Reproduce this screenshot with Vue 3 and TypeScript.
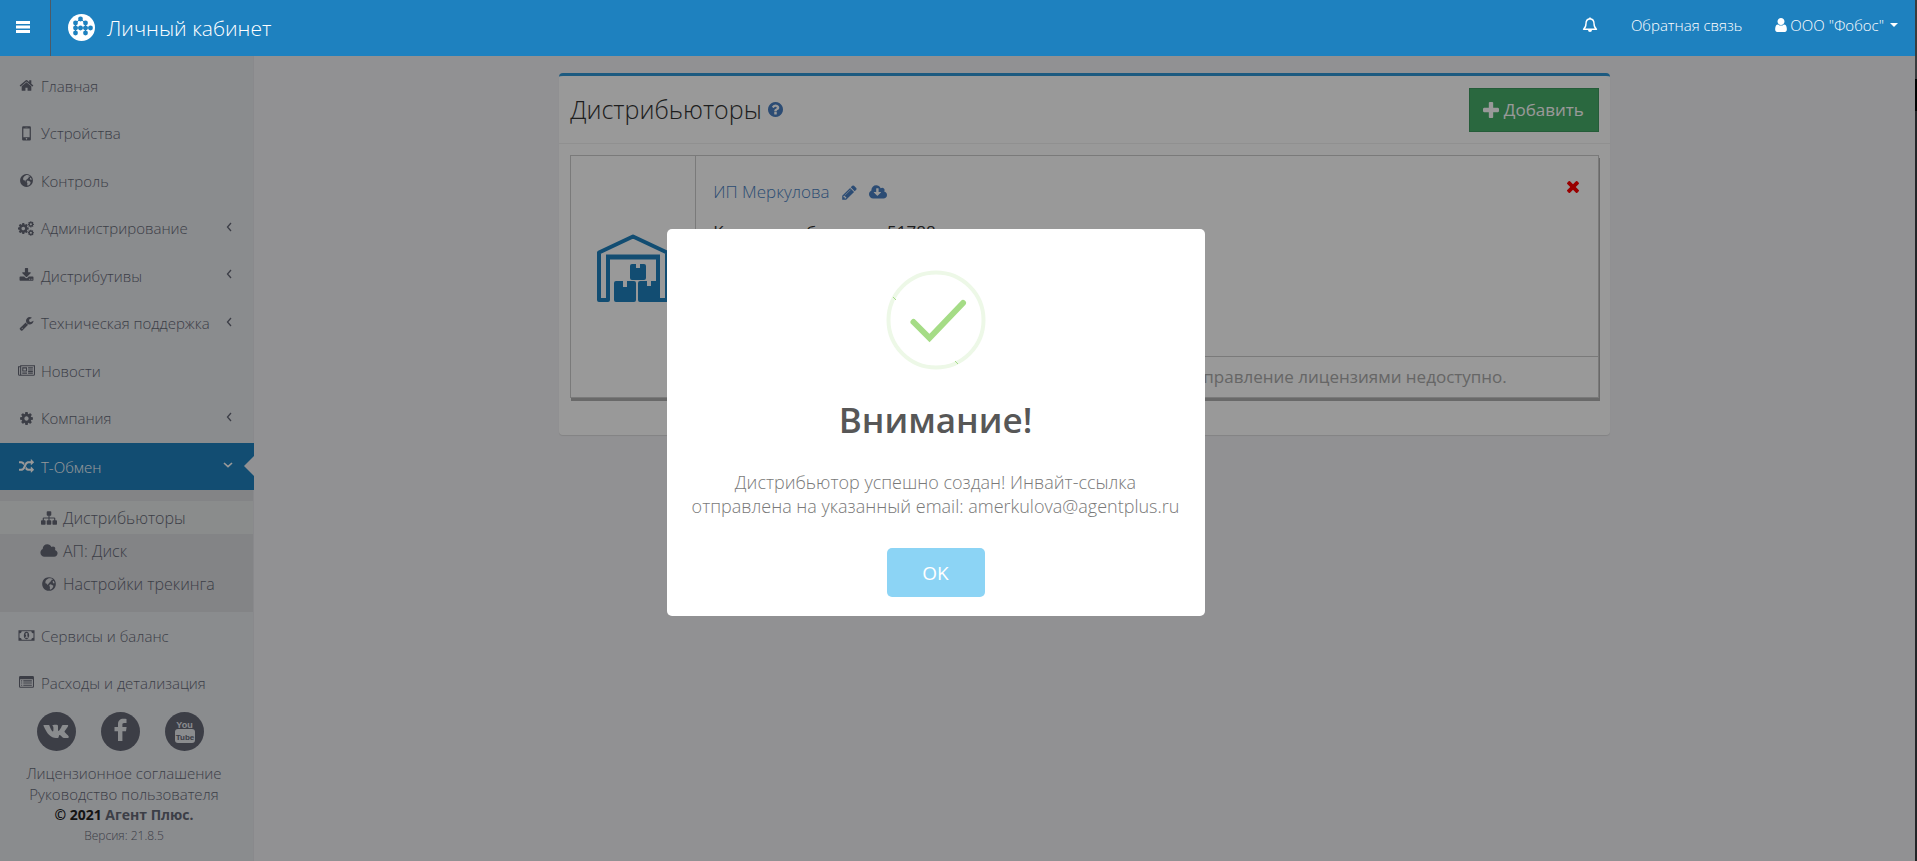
<script setup lang="ts">
import { ref } from 'vue'

interface Item {
  label: string
  icon: string
  sub?: boolean
}

const mainItems: Item[] = [
  { label: 'Главная', icon: 'home' },
  { label: 'Устройства', icon: 'mobile' },
  { label: 'Контроль', icon: 'globe' },
  { label: 'Администрирование', icon: 'cogs', sub: true },
  { label: 'Дистрибутивы', icon: 'download', sub: true },
  { label: 'Техническая поддержка', icon: 'wrench', sub: true },
  { label: 'Новости', icon: 'news' },
  { label: 'Компания', icon: 'cog', sub: true }
]
const subItems: Item[] = [
  { label: 'Дистрибьюторы', icon: 'sitemap' },
  { label: 'АП: Диск', icon: 'cloud' },
  { label: 'Настройки трекинга', icon: 'globe' }
]
const lastItems: Item[] = [
  { label: 'Сервисы и баланс', icon: 'money' },
  { label: 'Расходы и детализация', icon: 'list' }
]
const logoDots = [
  [12.5, 5], [7.5, 9], [17.5, 9], [7.5, 14], [12.5, 14], [17.5, 14], [22.5, 14], [7.5, 19], [17.5, 19]
]
const dialogOpen = ref(true)
</script>

<template>
  <svg class="defs" aria-hidden="true">
    <symbol id="home" viewBox="0 0 1792 1792"><path d="M1472 992v480q0 26-19 45t-45 19h-384v-384h-256v384h-384q-26 0-45-19t-19-45v-480q0-1 .5-3t.5-3l575-474 575 474q1 2 1 6zm223-69l-62 74q-8 9-21 11h-3q-13 0-21-7l-692-577-692 577q-12 8-24 7-13-2-21-11l-62-74q-8-10-7-23.5t11-21.5l719-599q32-26 76-26t76 26l244 204v-195q0-14 9-23t23-9h192q14 0 23 9t9 23v408l219 182q10 8 11 21.5t-7 23.5z" /></symbol>
    <symbol id="mobile" viewBox="0 0 1792 1792"><path fill-rule="evenodd" d="M500 40h792q128 0 128 128v1436q0 128-128 128h-792q-128 0-128-128v-1436q0-128 128-128zM520 290v1040h752v-1040zM896 1430a90 90 0 1 0 1 0zM760 140v50h272v-50z" /></symbol>
    <symbol id="globe" viewBox="0 0 1792 1792"><path fill-rule="evenodd" d="M896 128a768 768 0 1 0 1 0zM880 250l130-10 190 50 130 110-90 40-60-30-50 60 60 60-110 70-60 110-110 40-30 110-120 20 50 130-90-30-90-140-80 20-70-150 60-200 110-130zM1010 910l190 60 190 120-50 180-120 170-190 90-50-170 30-130-90-140zM1290 620l130-80 100 230-80 60-90-60z" /></symbol>
    <symbol id="cog" viewBox="0 0 1792 1792"><path d="M1152 896q0-106-75-181t-181-75-181 75-75 181 75 181 181 75 181-75 75-181zm512-109v222q0 12-8 23t-20 13l-185 28q-19 54-39 91 35 50 107 138 10 12 10 25t-9 23q-27 37-99 108t-94 71q-12 0-26-9l-138-108q-44 23-91 38-16 136-29 186-7 28-36 28h-222q-14 0-24.5-8.5t-11.5-21.5l-28-184q-49-16-90-37l-141 107q-10 9-25 9-14 0-25-11-126-114-165-168-7-10-7-23 0-12 8-23 15-21 51-66.5t54-70.5q-27-50-41-99l-183-27q-13-2-21-12.5t-8-23.5v-222q0-12 8-23t19-13l186-28q14-46 39-92-40-57-107-138-10-12-10-24 0-10 9-23 26-36 98.5-107.5t94.5-71.5q13 0 26 10l138 107q44-23 91-38 16-136 29-186 7-28 36-28h222q14 0 24.5 8.5t11.5 21.5l28 184q49 16 90 37l142-107q9-9 24-9 13 0 25 10 129 119 165 170 7 8 7 22 0 12-8 23-15 21-51 66.5t-54 70.5q26 50 41 98l183 28q13 2 21 12.5t8 23.5z" /></symbol>
    <symbol id="cogs" viewBox="0 0 1920 1792">
      <use href="#cog" x="-180" y="140" width="1510" height="1510" />
      <use href="#cog" x="1050" y="-30" width="860" height="860" />
      <use href="#cog" x="1050" y="970" width="860" height="860" />
    </symbol>
    <symbol id="download" viewBox="0 0 1792 1792"><path d="M1344 1344q0-26-19-45t-45-19-45 19-19 45 19 45 45 19 45-19 19-45zm256 0q0-26-19-45t-45-19-45 19-19 45 19 45 45 19 45-19 19-45zm128-224v320q0 40-28 68t-68 28h-1472q-40 0-68-28t-28-68v-320q0-40 28-68t68-28h465l135 136q58 56 136 56t136-56l136-136h464q40 0 68 28t28 68zm-325-569q17 41-14 70l-448 448q-18 19-45 19t-45-19l-448-448q-31-29-14-70 17-39 59-39h256v-448q0-26 19-45t45-19h256q26 0 45 19t19 45v448h256q42 0 59 39z" /></symbol>
    <symbol id="wrench" viewBox="0 0 1792 1792"><path d="M448 1472q0-26-19-45t-45-19-45 19-19 45 19 45 45 19 45-19 19-45zm644-420l-682 682q-37 37-90 37-52 0-91-37l-106-108q-38-36-38-90 0-53 38-91l681-681q39 98 114.5 173.5t173.5 114.5zm634-435q0 39-23 106-47 134-164.5 217.5t-258.5 83.5q-185 0-316.5-131.5t-131.5-316.5 131.5-316.5 316.5-131.5q58 0 121.5 16.5t107.5 46.5q16 11 16 28t-16 28l-293 169v224l193 107q5-3 79-48.5t135.5-81 70.5-35.5q15 0 23.5 10t8.5 25z" /></symbol>
    <symbol id="news" viewBox="0 0 2048 1792"><path fill-rule="evenodd" d="M256 256h1792v1088q0 192-192 192h-1664q-192 0-192-192v-960h256zM384 384v1024h1472q64 0 64-64v-960zM128 512v832q0 64 64 64t64-64v-832zM512 512h576v512h-576zM640 640v256h320v-256zM512 1150h576v128h-576zM1216 512h576v128h-576zM1216 768h576v128h-576zM1216 960h576v128h-576zM1216 1150h576v128h-576z" /></symbol>
    <symbol id="random" viewBox="0 0 1792 1792"><path d="M666 481q-60 92-137 273-22-45-37-72.5t-40.5-63.5-51-56.5-63-35-81.5-14.5h-224q-14 0-23-9t-9-23v-192q0-14 9-23t23-9h224q250 0 410 225zm1126 799q0 14-9 23l-320 320q-9 9-23 9-13 0-22.5-9.5t-9.5-22.5v-192q-32 0-85 .5t-81 1-73-1-71-5-64-10.5-63-18.5-58-28.5-59-40-55-53.5-56-69.5q59-93 136-273 22 45 37 72.5t40.5 63.5 51 56.5 63 35 81.5 14.5h256v-192q0-14 9-23t23-9q12 0 24 10l319 319q9 9 9 23zm0-896q0 14-9 23l-320 320q-9 9-23 9-13 0-22.5-9.5t-9.5-22.5v-192h-256q-48 0-87 15t-69 45-51 61.5-45 77.5q-32 62-78 171-29 66-49.5 111t-54 105-64 100-74 83-90 68.5-106.5 42-128 16.5h-224q-14 0-23-9t-9-23v-192q0-14 9-23t23-9h224q48 0 87-15t69-45 51-61.5 45-77.5q32-62 78-171 29-66 49.5-111t54-105 64-100 74-83 90-68.5 106.5-42 128-16.5h256v-192q0-14 9-23t23-9q12 0 24 10l319 319q9 9 9 23z" /></symbol>
    <symbol id="sitemap" viewBox="0 0 1792 1792"><path d="M1792 1248v320q0 40-28 68t-68 28h-320q-40 0-68-28t-28-68v-320q0-40 28-68t68-28h96v-192h-512v192h96q40 0 68 28t28 68v320q0 40-28 68t-68 28h-320q-40 0-68-28t-28-68v-320q0-40 28-68t68-28h96v-192h-512v192h96q40 0 68 28t28 68v320q0 40-28 68t-68 28h-320q-40 0-68-28t-28-68v-320q0-40 28-68t68-28h96v-192q0-52 38-90t90-38h512v-192h-96q-40 0-68-28t-28-68v-320q0-40 28-68t68-28h320q40 0 68 28t28 68v320q0 40-28 68t-68 28h-96v192h512q52 0 90 38t38 90v192h96q40 0 68 28t28 68z" /></symbol>
    <symbol id="cloud" viewBox="64 0 1920 1792"><path d="M1984 1152q0 159-112.5 271.5t-271.5 112.5h-1088q-185 0-316.5-131.5t-131.5-316.5q0-132 71-241.5t187-163.5q-2-28-2-43 0-212 150-362t362-150q158 0 286.5 88t187.5 230q70-62 166-62 106 0 181 75t75 181q0 75-41 138 129 30 213 134.5t84 239.5z" /></symbol>
    <symbol id="cloud-download" viewBox="64 0 1920 1792"><path d="M1344 864q0-14-9-23t-23-9h-224v-352q0-13-9.5-22.5t-22.5-9.5h-192q-13 0-22.5 9.5t-9.5 22.5v352h-224q-13 0-22.5 9.5t-9.5 22.5q0 14 9 23l352 352q9 9 23 9t23-9l351-351q10-12 10-24zm640 288q0 159-112.5 271.5t-271.5 112.5h-1088q-185 0-316.5-131.5t-131.5-316.5q0-130 70-240t188-165q-2-30-2-43 0-212 150-362t362-150q156 0 285.5 87t188.5 231q71-62 166-62 106 0 181 75t75 181q0 76-41 138 130 31 213.5 135.5t83.5 238.5z" /></symbol>
    <symbol id="money" viewBox="0 0 1920 1792"><path fill-rule="evenodd" d="M0 256h1920v1280h-1920zM384 384q0 106-75 181t-181 75v512q106 0 181 75t75 181h1152q0-106 75-181t181-75v-512q-106 0-181-75t-75-181zM960 460q320 40 320 436t-320 436q-320-40-320-436t320-436zM800 1152h384v-110h-120v-442h-110q-50 70-150 80v100h110v262h-114z" /></symbol>
    <symbol id="list" viewBox="0 0 1792 1792"><path fill-rule="evenodd" d="M160 128h1472q160 0 160 160v1088q0 160-160 160h-1472q-160 0-160-160v-1088q0-160 160-160zM128 512v864q0 32 32 32h1472q32 0 32-32v-864zM256 640h128v128h-128zM512 640h1024v128h-1024zM256 896h128v128h-128zM512 896h1024v128h-1024zM256 1152h128v128h-128zM512 1152h1024v128h-1024z" /></symbol>
    <symbol id="pencil" viewBox="0 0 1792 1792"><path d="M491 1536l91-91-235-235-91 91v107h128v128h107zm523-928q0-22-22-22-10 0-17 7l-542 542q-7 7-7 17 0 22 22 22 10 0 17-7l542-542q7-7 7-17zm-54-192l416 416-832 832h-416v-416zm683 96q0 53-37 90l-166 166-416-416 166-165q36-38 90-38 53 0 91 38l235 234q37 39 37 91z" /></symbol>
    <symbol id="question" viewBox="128 128 1536 1536"><path d="M1024 1376v-192q0-14-9-23t-23-9h-192q-14 0-23 9t-9 23v192q0 14 9 23t23 9h192q14 0 23-9t9-23zm256-672q0-88-55.5-163t-138.5-116-170-41q-243 0-371 213-15 24 8 42l132 100q7 6 19 6 16 0 25-12 53-68 86-92 34-24 86-24 48 0 85.5 26t37.5 59q0 38-20 61t-68 45q-63 28-115.5 86.5t-52.5 125.5v36q0 14 9 23t23 9h192q14 0 23-9t9-23q0-19 21.5-49.5t54.5-49.5q32-18 49-28.5t46-35 44.5-48 28-60.5 12.5-81zm384 192q0 209-103 385.5t-279.5 279.5-385.5 103-385.5-103-279.5-279.5-103-385.5 103-385.5 279.5-279.5 385.5-103 385.5 103 279.5 279.5 103 385.5z" /></symbol>
    <symbol id="times" viewBox="302 366 1188 1188"><path d="M1490 1322q0 40-28 68l-136 136q-28 28-68 28t-68-28l-294-294-294 294q-28 28-68 28t-68-28l-136-136q-28-28-28-68t28-68l294-294-294-294q-28-28-28-68t28-68l136-136q28-28 68-28t68 28l294 294 294-294q28-28 68-28t68 28l136 136q28 28 28 68t-28 68l-294 294 294 294q28 28 28 68z" /></symbol>
    <symbol id="plus" viewBox="192 128 1408 1408"><path d="M1600 736v192q0 40-28 68t-68 28h-416v416q0 40-28 68t-68 28h-192q-40 0-68-28t-28-68v-416h-416q-40 0-68-28t-28-68v-192q0-40 28-68t68-28h416v-416q0-40 28-68t68-28h192q40 0 68 28t28 68v416h416q40 0 68 28t28 68z" /></symbol>
    <symbol id="user" viewBox="256 128 1280 1536"><path d="M1536 1399q0 109-62.5 187t-150.5 78h-854q-88 0-150.5-78t-62.5-187q0-85 8.5-160.5t31.5-152 58.5-131 94-89 134.5-34.5q131 128 313 128t313-128q76 0 134.5 34.5t94 89 58.5 131 31.5 152 8.5 160.5zm-256-887q0 159-112.5 271.5t-271.5 112.5-271.5-112.5-112.5-271.5 112.5-271.5 271.5-112.5 271.5 112.5 112.5 271.5z" /></symbol>
    <symbol id="left" viewBox="0 0 6 10"><path d="M5 1L1.500 5l3.500 4" fill="none" stroke="currentColor" stroke-width="1.300" /></symbol>
    <symbol id="down" viewBox="0 0 10 6"><path d="M1 1l4 3.700L9 1" fill="none" stroke="currentColor" stroke-width="1.600" /></symbol>
  </svg>

  <div class="page">
    <header class="topbar">
      <button class="burger" type="button" aria-label="Меню">
        <svg width="14" height="12" viewBox="0 0 14 12"><path d="M0 0h14v3H0zM0 4.500h14v3H0zM0 9h14v3H0z" /></svg>
      </button>
      <a class="brand" href="#">
        <svg width="27" height="27" viewBox="0 0 27 27">
          <circle cx="13.500" cy="13.500" r="13.500" fill="#fff" />
          <g fill="#1e81bf">
            <path d="M7.500 14h15M7.500 9v10M17.500 9v10M7.500 9l5-4 5 4" fill="none" stroke="#1e81bf" stroke-width="1" />
            <circle v-for="(d, i) in logoDots" :key="i" :cx="d[0]" :cy="d[1]" r="2.400" />
          </g>
        </svg>
        <span>Личный кабинет</span>
      </a>
      <nav class="toplinks">
        <button class="bell" type="button" aria-label="Уведомления">
          <svg width="16" height="16" viewBox="0 0 16 16"><path d="M8 1.800c-2.800.3-4 2.200-4 4.800 0 2.800-.8 4.400-2.500 5.600h13c-1.700-1.200-2.500-2.800-2.500-5.600 0-2.600-1.200-4.500-4-4.800z" fill="none" stroke="currentColor" stroke-width="1.400" stroke-linejoin="round" /><path d="M7.200.6h1.600V2H7.200zM6 13h4a2 2 0 0 1-4 0z" /></svg>
        </button>
        <a href="#">Обратная связь</a>
        <button class="account" type="button">
          <svg width="12" height="14"><use href="#user" /></svg>
          <span>ООО "Фобос"</span>
          <i class="caret"></i>
        </button>
      </nav>
    </header>

    <div class="body">
      <aside class="sidebar">
        <nav>
          <div class="group main-group">
            <a v-for="it in mainItems" :key="it.label" class="item" href="#">
              <svg class="ico" :class="it.icon"><use :href="'#' + it.icon" /></svg>
              <span>{{ it.label }}</span>
              <svg v-if="it.sub" class="arrow" width="6" height="10"><use href="#left" /></svg>
            </a>
          </div>
          <a class="item active" href="#">
            <svg class="ico"><use href="#random" /></svg>
            <span>Т-Обмен</span>
            <svg class="arrow" width="10" height="6"><use href="#down" /></svg>
          </a>
          <div class="submenu">
            <a v-for="(it, i) in subItems" :key="it.label" :class="{ current: i === 0 }" href="#">
              <svg class="ico" :class="it.icon"><use :href="'#' + it.icon" /></svg>
              <span>{{ it.label }}</span>
            </a>
          </div>
          <div class="group">
            <a v-for="it in lastItems" :key="it.label" class="item" href="#">
              <svg class="ico"><use :href="'#' + it.icon" /></svg>
              <span>{{ it.label }}</span>
            </a>
          </div>
        </nav>
        <div class="social">
          <a href="#" aria-label="ВКонтакте">
            <svg width="39" height="39" viewBox="0 0 39 39"><circle cx="19.500" cy="19.500" r="19.500" /><path class="cut" d="M7 13h4.500c.7 0 .9.400 1.100 1 .8 2.400 2.300 5.400 3.200 5.400.5 0 .6-.5.6-1.400v-2.500c0-1.300-.7-1.600-1.200-1.800.5-.7 1.700-.9 3-.9 2.400 0 2.800.4 2.800 1.600v3.800c0 .6.300.8.500.8.800 0 2.700-3.200 3.400-5.200.2-.5.500-.8 1.100-.8h4.300c.9 0 1 .5.800 1.100-.5 1.600-3.600 5.200-3.600 5.500 0 .8 3.300 3.300 4.200 5 .4.900 0 1.400-.9 1.400h-4c-1.600 0-2.700-2.900-4.200-2.900-1 0-.5 2.900-1.700 2.900h-2c-4.800 0-8.800-3.800-12.300-12-.2-.6-.1-1 .4-1z" /></svg>
          </a>
          <a href="#" aria-label="Facebook">
            <svg width="39" height="39" viewBox="0 0 39 39"><circle cx="19.500" cy="19.500" r="19.500" /><path class="cut" d="M25.500 7v4h-2.400c-1.500 0-1.700.8-1.700 1.800V15h4.200l-.6 4.300h-3.600V29H17v-9.700h-3.500V15H17v-2.700c0-3.600 2.100-5.500 5.300-5.500 1.500 0 2.600.1 3.200.2z" /></svg>
          </a>
          <a href="#" aria-label="YouTube">
            <svg width="39" height="39" viewBox="0 0 39 39"><circle cx="19.500" cy="19.500" r="19.500" /><rect class="cut" x="10" y="17" width="20" height="14" rx="3" /><text class="cut you" x="19.500" y="15.500">You</text><text class="tube" x="20" y="27.500">Tube</text></svg>
          </a>
        </div>
        <footer class="legal">
          <a href="#">Лицензионное соглашение</a>
          <a href="#">Руководство пользователя</a>
          <strong>© 2021 <a href="#">Агент Плюс.</a></strong>
          <small>Версия: 21.8.5</small>
        </footer>
      </aside>

      <main class="content">
        <section class="panel">
          <div class="panel-head">
            <h1>Дистрибьюторы</h1>
            <a class="help" href="#" aria-label="Справка"><svg width="15" height="15"><use href="#question" /></svg></a>
            <button class="add" type="button">
              <svg width="16" height="16"><use href="#plus" /></svg>
              <span>Добавить</span>
            </button>
          </div>
          <article class="card">
            <div class="pic">
              <svg width="74" height="70" viewBox="0 0 74 70">
                <g fill="none" stroke="#1e81bf" stroke-width="4" stroke-linejoin="round">
                  <path d="M3 67V19.500L37 3.500l34 16V67h-9V24H12v43z" />
                  <path d="M10 24h54" stroke-width="5" />
                </g>
                <path fill="#1e81bf" d="M36 31h4v4h4v-4h4q2 0 2 2v12q0 2-2 2H36q-2 0-2-2V33q0-2 2-2zM20 48h7v6h4v-6h7q2 0 2 2v17q0 2-2 2H20q-2 0-2-2V50q0-2 2-2zM44 48h7v5h4v-5h7v21H44q-2 0-2-2V50q0-2 2-2z" />
              </svg>
            </div>
            <div class="info">
              <div class="details">
                <div class="name">
                  <a href="#">ИП Меркулова</a>
                  <a href="#" aria-label="Изменить"><svg width="17" height="17"><use href="#pencil" /></svg></a>
                  <a href="#" aria-label="Скачать"><svg width="18" height="17"><use href="#cloud-download" /></svg></a>
                </div>
                <p>Код дистрибьютора: 51788</p>
                <button class="remove" type="button" aria-label="Удалить"><svg width="12" height="12"><use href="#times" /></svg></button>
              </div>
              <div class="note">Управление лицензиями недоступно.</div>
            </div>
          </article>
        </section>
      </main>
    </div>

    <div v-if="dialogOpen" class="overlay">
      <div class="dialog" role="dialog" aria-modal="true" aria-labelledby="dialog-title">
        <svg class="ok-mark" width="100" height="100" viewBox="0 0 100 100" fill="none">
          <circle cx="50" cy="50" r="47.500" stroke="#edf8e7" stroke-width="4" />
          <path d="M27.500 52L43.500 68L77 33" stroke="#a5dc86" stroke-width="6" stroke-linecap="round" />
          <path d="M7 27l3 3M69 91l3 3" stroke="#a5dc86" stroke-width="1" />
        </svg>
        <h2 id="dialog-title">Внимание!</h2>
        <p>Дистрибьютор успешно создан! Инвайт-ссылка отправлена на указанный email: amerkulova@agentplus.ru</p>
        <button type="button" @click="dialogOpen = false">OK</button>
      </div>
    </div>
    <div class="edge"></div>
  </div>
</template>

<style>
body {
  margin: 0;
  background: #f2f2f5;
}
</style>

<style scoped>
.defs {
  position: absolute;
  width: 0;
  height: 0;
}
.page {
  box-sizing: border-box;
  min-height: 100vh;
  display: flex;
  flex-direction: column;
  padding-right: 2px;
  font-family: "Open Sans", "Noto Sans", sans-serif;
  font-size: 15px;
  font-weight: 300;
  color: #333;
}
.page * {
  box-sizing: border-box;
}
a {
  color: inherit;
  text-decoration: none;
}
button {
  font: inherit;
  color: inherit;
  border: 0;
  padding: 0;
  background: none;
  cursor: pointer;
}
svg {
  display: block;
  flex: none;
  fill: currentColor;
}
svg[fill="none"] {
  fill: none;
}
.topbar {
  position: relative;
  z-index: 20;
  display: flex;
  height: 56px;
  background: #1e81bf;
  color: #fff;
}
.burger {
  width: 51px;
  padding: 0 0 3px 16px;
  border-right: 1px solid #4d5a66;
}
.brand {
  display: flex;
  align-items: center;
  gap: 12px;
  padding: 0 0 1px 17px;
  font-size: 21px;
}
.toplinks {
  display: flex;
  align-items: center;
  margin-left: auto;
  padding: 0 17px 6px 0;
}
.bell {
  margin-right: 33px;
}
.account {
  display: flex;
  align-items: center;
  gap: 3px;
  margin-left: 33px;
}
.caret {
  margin-left: 3px;
  border: 4px solid transparent;
  border-top-color: #fff;
  border-bottom: 0;
}
.body {
  flex: 1;
  display: flex;
}
.sidebar {
  flex: none;
  width: 254px;
  padding-top: 6px;
  background: #e7e9ed;
  border-right: 1px solid #e4e5e9;
  color: #646876;
}
.main-group {
  display: grid;
  grid-auto-rows: 1fr;
  min-height: 380px;
}
.item {
  position: relative;
  display: flex;
  align-items: center;
  min-height: 47px;
  padding: 0 21px 0 18px;
}
.ico {
  width: 17px;
  height: 15px;
  margin-right: 6px;
}
.arrow {
  margin-left: auto;
  margin-bottom: 3px;
}
.active {
  width: 254px;
  margin-top: 1px;
  background: #1e81bf;
  color: #fff;
}
.active::after {
  content: "";
  position: absolute;
  right: 0;
  top: 13px;
  border: 10px solid transparent;
  border-left: 0;
  border-right-color: #f2f2f5;
}
.submenu {
  padding: 11px 0 12px;
  background: #dbdce0;
  font-size: 16px;
}
.submenu a {
  display: flex;
  align-items: center;
  height: 33px;
  padding-left: 40px;
}
.submenu .current {
  background: #e7e9e9;
}
.submenu .ico {
  width: 18px;
  height: 16px;
  margin-right: 5px;
}
.social {
  display: flex;
  gap: 25px;
  padding: 6px 0 0 37px;
}
.social .cut {
  fill: #e7e9ed;
}
.social text {
  font: bold 10px "Liberation Sans Narrow", "Liberation Sans", sans-serif;
  text-anchor: middle;
}
.social .you {
  font-size: 9px;
}
.social .tube {
  font-size: 8px;
}
.legal {
  display: flex;
  flex-direction: column;
  align-items: center;
  padding: 12px 5px 0 0;
  line-height: 21px;
}
.legal strong {
  font-size: 14px;
  font-weight: 700;
  line-height: 20px;
  color: #222;
}
.legal strong a {
  color: #646876;
}
.legal small {
  font-size: 12px;
  line-height: 22px;
}
.content {
  flex: 1;
  padding: 17px 20px 0;
}
.panel {
  width: calc((100% * 2 / 3) - 30px);
  margin: 0 auto;
  padding-bottom: 37px;
  background: #fff;
  border-top: 3px solid #2f97d6;
  border-radius: 4px;
  box-shadow: 0 1px 1px rgba(0, 0, 0, 0.1);
}
.panel-head {
  display: flex;
  align-items: center;
  height: 68px;
  padding: 0 11px;
  border-bottom: 1px solid #f0f0f0;
}
h1 {
  margin: 0;
  font-size: 25px;
  font-weight: 300;
  line-height: 32px;
  padding-bottom: 2px;
}
.help {
  margin-left: 6px;
  color: #4a7fc1;
}
.add {
  display: flex;
  align-items: center;
  justify-content: center;
  gap: 5px;
  height: 44px;
  margin-left: auto;
  padding: 0 14px 0 13px;
  border: 1px solid #3f9a5f;
  background: #47ae6a;
  color: #fff;
  font-size: 17px;
  font-weight: 400;
}
.card {
  display: flex;
  min-height: 243px;
  margin: 11px 11px 0;
  border: 1px solid #ccc;
  box-shadow: 1px 3px 0 #b0b0b0;
}
.pic {
  flex: none;
  display: flex;
  align-items: center;
  justify-content: center;
  width: 125px;
  padding-bottom: 18px;
  border-right: 1px solid #ccc;
}
.info {
  flex: 1;
  display: flex;
  flex-direction: column;
}
.details {
  position: relative;
  flex: 1;
  padding: 23px 17px 0;
  font-size: 17px;
}
.name {
  display: flex;
  align-items: center;
  gap: 11px;
  line-height: 26px;
  color: #4a7fc1;
}
.details p {
  margin: 15px 0 0;
  line-height: 24px;
  font-weight: 400;
}
.remove {
  position: absolute;
  top: 25px;
  right: 19px;
  color: #f00;
}
.note {
  height: 41px;
  padding-right: 91px;
  border-top: 1px solid #ccc;
  font-size: 17px;
  font-weight: 400;
  line-height: 40px;
  text-align: right;
  color: #aaa;
}
.overlay {
  position: fixed;
  inset: 0;
  z-index: 10;
  display: flex;
  align-items: center;
  justify-content: center;
  padding: 0 46px 16px 0;
  background: rgba(0, 0, 0, 0.4);
}
.dialog {
  display: flex;
  flex-direction: column;
  align-items: center;
  width: 538px;
  padding: 41px 19px 19px;
  border-radius: 5px;
  background: #fff;
  text-align: center;
}
.dialog h2 {
  margin: 28px 0;
  font-size: 35px;
  font-weight: 600;
  line-height: 44px;
  color: #575757;
}
.dialog p {
  margin: 0 0 30px;
  font-size: 18px;
  line-height: 24px;
  color: #797979;
}
.dialog button {
  width: 98px;
  height: 49px;
  border-radius: 5px;
  background: #8cd4f5;
  color: #fff;
  font-size: 19px;
  font-weight: 400;
}
.edge {
  position: fixed;
  z-index: 30;
  top: 0;
  right: 0;
  bottom: 0;
  width: 2px;
  background: linear-gradient(#3a3b3d 0 79px, #000 79px 111px, #232427 111px);
}
</style>
